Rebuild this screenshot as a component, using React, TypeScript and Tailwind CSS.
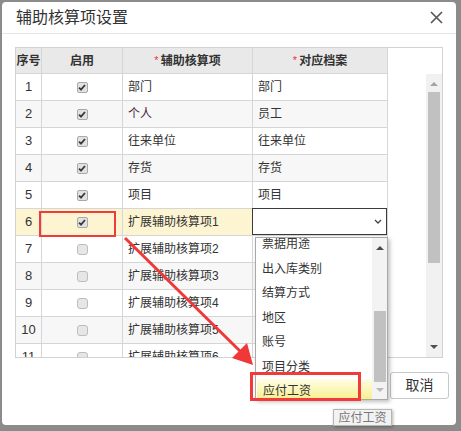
import React from "react";

const FONT = '"Liberation Sans","Noto Sans CJK SC",sans-serif';

type Row = { n: number; on: boolean; item: string; file: string | null };

const ROWS: Row[] = [
  { n: 1, on: true, item: "部门", file: "部门" },
  { n: 2, on: true, item: "个人", file: "员工" },
  { n: 3, on: true, item: "往来单位", file: "往来单位" },
  { n: 4, on: true, item: "存货", file: "存货" },
  { n: 5, on: true, item: "项目", file: "项目" },
  { n: 6, on: true, item: "扩展辅助核算项1", file: null },
  { n: 7, on: false, item: "扩展辅助核算项2", file: "" },
  { n: 8, on: false, item: "扩展辅助核算项3", file: "" },
  { n: 9, on: false, item: "扩展辅助核算项4", file: "" },
  { n: 10, on: false, item: "扩展辅助核算项5", file: "" },
  { n: 11, on: false, item: "扩展辅助核算项6", file: "" },
];

const OPTIONS = ["票据用途", "出入库类别", "结算方式", "地区", "账号", "项目分类", "应付工资"];

function Checkbox({ checked }: { checked: boolean }) {
  if (checked) {
    return (
      <span className="w-[11px] h-[11px] rounded-[2px] border border-[#a9a9a9] bg-[#e2e2e2] flex items-center justify-center">
        <svg width="8" height="7" viewBox="0 0 8 7">
          <path d="M1 3.6 L3 5.6 L7 1" stroke="#3a3a3a" strokeWidth="1.8" fill="none" />
        </svg>
      </span>
    );
  }
  return <span className="w-[11px] h-[11px] rounded-[3px] border border-[#bdbdbd] bg-[#e6e6e6]" />;
}

export default function App() {
  return (
    <div className="relative w-[461px] h-[431px] bg-[#8b8b8b] pt-[2px] pl-[2px] overflow-hidden" style={{ fontFamily: FONT }}>
      {/* Dialog */}
      <div className="w-[454px] h-[423px] bg-white rounded-[4px] flex flex-col">
        <div className="h-[32px] border-b border-[#e6e6e6] flex items-center justify-between pl-[14px] pr-[13px]">
          <span className="text-[16px] text-[#333] leading-none">辅助核算项设置</span>
          <svg width="13" height="13" viewBox="0 0 13 13">
            <path d="M1 1 L12 12 M12 1 L1 12" stroke="#555" strokeWidth="1.6" />
          </svg>
        </div>

        {/* Table box */}
        <div className="ml-[13px] mt-[13px] w-[428px] h-[311px] border border-[#d2d2d2] flex overflow-hidden">
          <div className="w-[372px] shrink-0 text-[12px] text-[#333]">
            <div className="flex h-[26px] bg-[#e9e9e9] border-b border-[#d6d6d6] font-bold">
              <div className="w-[26px] border-r border-[#d6d6d6] flex items-center justify-center">序号</div>
              <div className="w-[81px] border-r border-[#d6d6d6] flex items-center justify-center">启用</div>
              <div className="w-[130px] border-r border-[#d6d6d6] flex items-center justify-center">
                <span className="text-[#f0303a] font-normal text-[11px] mr-[2px]">*</span>辅助核算项
              </div>
              <div className="w-[135px] border-r border-[#d6d6d6] flex items-center justify-center">
                <span className="text-[#f0303a] font-normal text-[11px] mr-[2px]">*</span>对应档案
              </div>
            </div>
            {ROWS.map((r) => {
              const bg = r.n === 6 ? "bg-[#fdf5d2]" : r.n % 2 === 0 ? "bg-[#f7f7f7]" : "bg-white";
              return (
                <div key={r.n} className={`flex h-[27px] border-b border-[#d6d6d6] ${bg}`}>
                  <div className="w-[26px] border-r border-[#d6d6d6] flex items-center justify-center text-[13px]">{r.n}</div>
                  <div className="w-[81px] border-r border-[#d6d6d6] flex items-center justify-center">
                    <Checkbox checked={r.on} />
                  </div>
                  <div className={`w-[130px] border-r border-[#d6d6d6] flex items-center pl-[5px] ${r.n === 2 ? "text-[#4a1d3a]" : ""}`}>
                    {r.item}
                  </div>
                  {r.file === null ? (
                    <div className="w-[135px] border-r border-[#d6d6d6] bg-white flex">
                      <div className="flex-1 -ml-px -mt-px border border-[#3a3a3a] flex items-center justify-end pr-[4px]">
                        <svg width="8" height="5" viewBox="0 0 8 5">
                          <path d="M1 1 L4 4 L7 1" stroke="#444" strokeWidth="1.3" fill="none" />
                        </svg>
                      </div>
                    </div>
                  ) : (
                    <div className="w-[135px] border-r border-[#d6d6d6] flex items-center pl-[5px]">{r.file}</div>
                  )}
                </div>
              );
            })}
          </div>
          <div className="flex-1 flex justify-end">
            <div className="w-[16px] mt-[26px] bg-[#f1f1f1] flex flex-col items-center">
              <div className="h-[18px] flex items-center justify-center">
                <svg width="8" height="5" viewBox="0 0 8 5">
                  <path d="M0 5 L4 1 L8 5 Z" fill="#a3a3a3" />
                </svg>
              </div>
              <div className="w-[12px] h-[171px] bg-[#c1c1c1]" />
              <div className="flex-1" />
              <div className="h-[16px] mb-[2px] flex items-center justify-center">
                <svg width="8" height="5" viewBox="0 0 8 5">
                  <path d="M0 0 L4 4 L8 0 Z" fill="#505050" />
                </svg>
              </div>
            </div>
          </div>
        </div>

        {/* Footer */}
        <div className="flex justify-end pr-[7px] mt-[14px]">
          <button className="w-[59px] h-[27px] border border-[#c8c8c8] rounded-[3px] bg-white text-[14px] text-[#333]">取消</button>
        </div>
      </div>

      {/* Red box around enabled cell */}
      <div className="absolute left-[39px] top-[211px] w-[77px] h-[26px] border-2 border-[#f23a3a]" />

      {/* Arrow */}
      <svg className="absolute left-0 top-0 pointer-events-none" width="461" height="431" viewBox="0 0 461 431">
        <line x1="125" y1="238" x2="242" y2="353" stroke="#ef3838" strokeWidth="3" />
        <path d="M253 365 L247 343 L232 358 Z" fill="#ef3838" />
      </svg>

      {/* Dropdown list */}
      <div className="absolute left-[255px] top-[237px] w-[133px] h-[163px] bg-white border border-[#a8a8a8] shadow-[2px_2px_4px_rgba(0,0,0,0.25)] flex overflow-hidden text-[12px] text-[#333]">
        <div className="flex-1 -mt-[6px] flex flex-col">
          {OPTIONS.map((o) => (
            <div
              key={o}
              className={`h-[24.5px] shrink-0 flex items-center pl-[6px] ${
                o === "应付工资" ? "ml-[1px] bg-gradient-to-b from-[#fffde6] to-[#f6ec72]" : ""
              }`}
            >
              {o}
            </div>
          ))}
        </div>
        <div className="w-[15px] bg-[#f3f3f3] flex flex-col items-center">
          <div className="h-[18px] flex items-center justify-center">
            <svg width="8" height="5" viewBox="0 0 8 5">
              <path d="M0 5 L4 1 L8 5 Z" fill="#4a4a4a" />
            </svg>
          </div>
          <div className="flex-1" />
          <div className="w-[12px] h-[71px] bg-[#c1c1c1]" />
          <div className="h-[17px] flex items-center justify-center">
            <svg width="8" height="5" viewBox="0 0 8 5">
              <path d="M0 0 L4 4 L8 0 Z" fill="#b8b8b8" />
            </svg>
          </div>
        </div>
      </div>

      {/* Red box around chosen item */}
      <div className="absolute left-[250px] top-[372px] w-[111px] h-[29px] border-[3px] border-[#f23a3a]" />

      {/* Tooltip */}
      <div className="absolute left-[333px] top-[409px] w-[59px] h-[17px] bg-[#f2f2f2] border border-[#b5b5b5] shadow-[1px_1px_3px_rgba(0,0,0,0.3)] flex items-center justify-center text-[12px] text-[#777] leading-none">
        应付工资
      </div>
    </div>
  );
}
